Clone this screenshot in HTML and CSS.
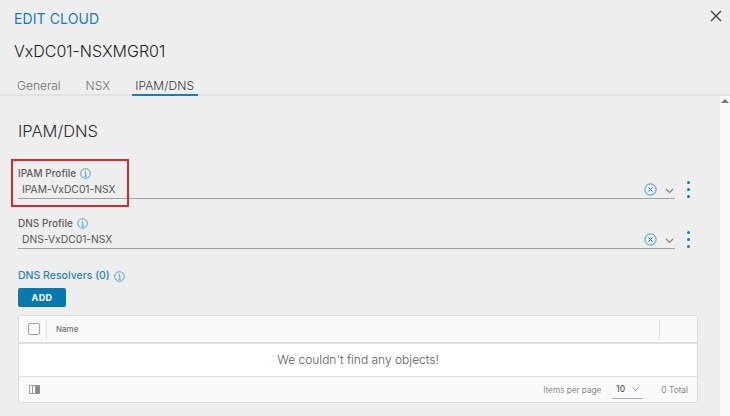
FILE: index.html
```html
<!DOCTYPE html>
<html>
<head>
    <link rel="stylesheet" href="styles.css">
</head>
<body>
    <div class="modal">
        <!-- Header Section -->
        <div class="modal-header">
            <div class="header-top">
                <div class="eyebrow">EDIT CLOUD</div>
                <svg class="close-icon" width="12" height="12" viewBox="0 0 12 12"><path d="M1 1L11 11M11 1L1 11" stroke="#3a3a3a" stroke-width="1.3" fill="none"/></svg>
            </div>
            <div class="cloud-name">VxDC01-NSXMGR01</div>
            <div class="tabs">
                <span class="tab">General</span>
                <span class="tab">NSX</span>
                <span class="tab active">IPAM/DNS</span>
            </div>
        </div>

        <div class="modal-body">
            <div class="content">
                <h2 class="section-title">IPAM/DNS</h2>

                <!-- Profile Fields -->
                <div class="field first-field">
                    <div class="highlight-box"></div>
                    <div class="field-label">IPAM Profile
                        <svg class="info-icon" width="11" height="11" viewBox="0 0 11 11"><circle cx="5.5" cy="5.5" r="4.8"/><path d="M4.5 4.6H5.8V8M4.4 8.2H6.8M5.5 2.6V3.5"/></svg>
                    </div>
                    <div class="field-row">
                        <div class="select-box">
                            <span class="select-value">IPAM-VxDC01-NSX</span>
                            <svg class="clear-icon" width="13" height="13" viewBox="0 0 13 13"><circle cx="6.5" cy="6.5" r="5.6"/><path class="clear-x" d="M4.5 4.5L8.5 8.5M8.5 4.5L4.5 8.5"/></svg>
                            <svg class="caret-icon" width="9" height="6" viewBox="0 0 9 6"><path d="M1 1L4.5 4.5L8 1"/></svg>
                        </div>
                        <div class="kebab"><i></i><i></i><i></i></div>
                    </div>
                </div>

                <div class="field">
                    <div class="field-label">DNS Profile
                        <svg class="info-icon" width="11" height="11" viewBox="0 0 11 11"><circle cx="5.5" cy="5.5" r="4.8"/><path d="M4.5 4.6H5.8V8M4.4 8.2H6.8M5.5 2.6V3.5"/></svg>
                    </div>
                    <div class="field-row">
                        <div class="select-box">
                            <span class="select-value">DNS-VxDC01-NSX</span>
                            <svg class="clear-icon" width="13" height="13" viewBox="0 0 13 13"><circle cx="6.5" cy="6.5" r="5.6"/><path class="clear-x" d="M4.5 4.5L8.5 8.5M8.5 4.5L4.5 8.5"/></svg>
                            <svg class="caret-icon" width="9" height="6" viewBox="0 0 9 6"><path d="M1 1L4.5 4.5L8 1"/></svg>
                        </div>
                        <div class="kebab"><i></i><i></i><i></i></div>
                    </div>
                </div>

                <!-- DNS Resolvers -->
                <div class="resolvers-title">DNS Resolvers (0)
                    <svg class="info-icon" width="11" height="11" viewBox="0 0 11 11"><circle cx="5.5" cy="5.5" r="4.8"/><path d="M4.5 4.6H5.8V8M4.4 8.2H6.8M5.5 2.6V3.5"/></svg>
                </div>
                <button class="add-button">ADD</button>

                <div class="grid">
                    <div class="grid-head">
                        <span class="checkbox"></span>
                        <span class="grid-col">Name</span>
                        <span class="grid-end"></span>
                    </div>
                    <div class="grid-empty">We couldn't find any objects!</div>
                    <div class="grid-foot">
                        <svg class="columns-icon" width="11" height="9" viewBox="0 0 11 9"><path d="M0.5 0.5H10.5V8.5H0.5ZM3.5 0.5V8.5M6.5 0.5V8.5" fill="none" stroke="#9a9a9a"/><rect x="7" y="0.5" width="3.5" height="8" fill="#888"/></svg>
                        <span class="per-page">Items per page</span>
                        <span class="page-select">10
                            <svg width="7" height="4" viewBox="0 0 7 4"><path d="M0.5 0.5L3.5 3.5L6.5 0.5" fill="none" stroke="#999"/></svg>
                        </span>
                        <span class="total">0 Total</span>
                    </div>
                </div>
            </div>
            <div class="scrollbar"><span class="scroll-up"></span></div>
        </div>
    </div>
</body>
</html>
```

FILE: styles.css
```css
/* Global Styles */
html, body {
    margin: 0;
    height: 100%;
    overflow: hidden;
}

body {
    background-color: #eeeeee;
    color: #3d3d3d;
    font-family: "Inter", sans-serif;
}

.modal {
    display: flex;
    flex-direction: column;
    height: 416px;
}

/* Header Styles */
.modal-header {
    height: 94px;
    padding: 0 8px 0 14px;
    border-bottom: 2px solid #e2e2e2;
    display: flex;
    flex-direction: column;
}

.header-top {
    display: flex;
    justify-content: space-between;
    align-items: flex-start;
    padding-top: 10px;
}

.eyebrow {
    color: #1a7fae;
    font-size: 14px;
    line-height: 18px;
    letter-spacing: 0.1px;
}

.cloud-name {
    margin-top: 13px;
    font-size: 16px;
    line-height: 20px;
    font-weight: 300;
    color: #222222;
}

.tabs {
    display: flex;
    margin-top: 17px;
    margin-left: 3px;
    gap: 25px;
}

.tab {
    font-size: 12px;
    line-height: 16px;
    font-weight: 300;
    color: #6e6e6e;
}

.tab.active {
    color: #3a3a3a;
    margin-left: -3px;
    padding: 0 4px 0 3px;
    letter-spacing: 0.1px;
    border-bottom: 2px solid #1a7fae;
}

/* Body */
.modal-body {
    flex: 1;
    display: flex;
    min-height: 0;
}

.content {
    flex: 1;
    padding: 0 22px 0 18px;
}

.scrollbar {
    width: 10px;
    background-color: #f8f8f8;
    display: flex;
    justify-content: center;
    padding-top: 3px;
}

.scroll-up {
    width: 0;
    height: 0;
    border-left: 4px solid transparent;
    border-right: 4px solid transparent;
    border-bottom: 4px solid #777777;
}

.section-title {
    margin: 25px 0 0;
    font-size: 16.5px;
    line-height: 20px;
    font-weight: 300;
    color: #2e2e2e;
}

/* Profile Fields */
.field {
    position: relative;
    margin-top: 17px;
}

.first-field {
    margin-top: 25px;
}

.highlight-box {
    position: absolute;
    left: -7px;
    top: -7px;
    width: 114px;
    height: 44px;
    border: 2px solid #d9272e;
}

.field-label {
    display: flex;
    align-items: center;
    gap: 4px;
    font-size: 10px;
    line-height: 14px;
    font-weight: 500;
    color: #5e5e5e;
}

.field-row {
    display: flex;
    align-items: center;
}

.select-box {
    width: 653px;
    height: 18px;
    border-bottom: 1px solid #9aa3a8;
    display: flex;
    align-items: center;
    padding-left: 4px;
}

.select-value {
    flex: 1;
    font-size: 10.3px;
    color: #555555;
}

.clear-icon circle,
.clear-icon path {
    fill: none;
    stroke: #2b9bd0;
    stroke-width: 1;
}

.clear-icon .clear-x {
    stroke: #1a7fae;
}

.caret-icon {
    margin: 3px 1px 0 8.5px;
}

.caret-icon path {
    fill: none;
    stroke: #808080;
    stroke-width: 1.2;
}

.kebab {
    display: flex;
    flex-direction: column;
    gap: 4px;
    margin-left: 12px;
}

.kebab i {
    display: block;
    width: 3px;
    height: 3px;
    border-radius: 50%;
    background-color: #0f7cb0;
}

.info-icon {
    fill: none;
    stroke: #3f97c4;
    stroke-width: 0.9;
}

/* DNS Resolvers */
.resolvers-title {
    display: flex;
    align-items: center;
    gap: 4px;
    margin-top: 20px;
    font-size: 10.5px;
    line-height: 14px;
    font-weight: 500;
    color: #2a84b2;
}

.add-button {
    display: block;
    margin-top: 5px;
    width: 48px;
    height: 19px;
    padding: 0;
    border: none;
    border-radius: 2px;
    background-color: #0878ae;
    color: #ffffff;
    font-family: inherit;
    font-size: 9px;
    font-weight: 700;
    letter-spacing: 0.4px;
}

/* Grid */
.grid {
    width: 680px;
    margin-top: 8px;
    border: 1px solid #dcdcdc;
    border-radius: 2px;
    box-sizing: border-box;
    background-color: #fafafa;
    height: 88px;
    display: flex;
    flex-direction: column;
}

.grid-head {
    height: 26px;
    flex: none;
    display: flex;
    align-items: center;
    border-bottom: 2px solid #dedede;
    padding-left: 9px;
}

.checkbox {
    width: 10px;
    height: 10px;
    border: 1px solid #9aa3a8;
    border-radius: 2px;
    background-color: #ffffff;
}

.grid-col {
    flex: 1;
    margin-left: 6px;
    padding-left: 9px;
    border-left: 1px solid #dedede;
    font-size: 8px;
    line-height: 19px;
    font-weight: 500;
    color: #707070;
}

.grid-end {
    width: 37px;
    height: 19px;
    border-left: 1px solid #dedede;
}

.grid-empty {
    height: 32px;
    flex: none;
    background-color: #ffffff;
    border-bottom: 1px solid #e0e0e0;
    text-align: center;
    font-size: 12px;
    line-height: 32px;
    font-weight: 300;
    color: #5a5a5a;
}

.grid-foot {
    flex: 1;
    display: flex;
    align-items: center;
    padding: 0 9px 0 10px;
    font-size: 8.3px;
    font-weight: 300;
    color: #666666;
}

.columns-icon {
    margin-right: auto;
}

.page-select {
    display: flex;
    align-items: center;
    gap: 7px;
    margin-left: 11px;
    padding: 0 4px;
    width: 23px;
    height: 18px;
    border-bottom: 1px solid #a5adb2;
    color: #444444;
    font-size: 8.5px;
    font-weight: 400;
}

.total {
    margin-left: 18px;
    font-size: 8.5px;
}
```
